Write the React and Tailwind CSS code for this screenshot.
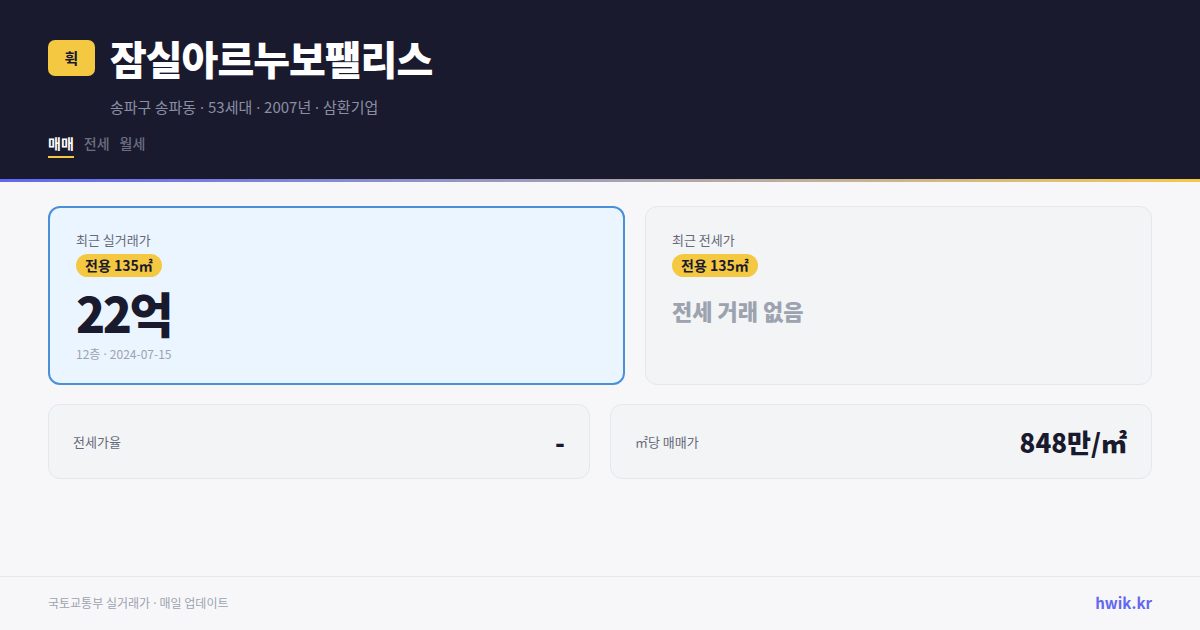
import React from "react";

const FONT = { fontFamily: '"Noto Sans CJK KR", "Noto Sans", sans-serif' };
const DOT = { fontFamily: '"Noto Sans", sans-serif' };

function Dot() {
  return <span style={DOT}> · </span>;
}

export default function App() {
  return (
    <div className="w-[1200px] h-[630px] flex flex-col bg-[#f7f7f9] overflow-hidden" style={FONT}>
      <header className="bg-[#1a1a2e] h-[179px] px-12 pt-[39px] flex flex-col">
        <div className="flex items-center gap-[15px]">
          <div className="w-[47px] h-[36px] rounded-[7px] bg-[#f5c842] flex items-center justify-center text-[15px] font-bold text-[#1a1a2e]">
            휙
          </div>
          <h1 className="text-[40px] leading-[38px] font-black text-white tracking-[-1px]">잠실아르누보팰리스</h1>
        </div>
        <div className="pl-[62px] mt-[20px] text-[15px] leading-[20px] text-[#8b8fa3]">
          송파구 송파동<Dot />53세대<Dot />2007년<Dot />삼환기업
        </div>
        <div className="flex gap-[10px] mt-[16px] text-[14px] leading-[20px]">
          <div className="font-bold text-white border-b-2 border-[#f5c842] pb-[3px]">매매</div>
          <div className="text-[#6b6f82] font-medium">전세</div>
          <div className="text-[#6b6f82] font-medium">월세</div>
        </div>
      </header>
      <div className="h-[3px] bg-gradient-to-r from-[#6366f1] to-[#f5c842]" />
      <main className="flex-1 px-12 pt-6 flex flex-col gap-[19px]">
        <div className="flex gap-5 h-[179px]">
          <div className="w-[577px] rounded-xl border-2 border-[#4a90d9] bg-[#ebf5ff] px-[26px] pt-[22px] flex flex-col">
            <div className="text-[13px] leading-[20px] text-[#666a78]">최근 실거래가</div>
            <div className="mt-[4px] self-start rounded-full bg-[#f5c842] px-[9px] h-[23px] flex items-center text-[14px] font-bold text-[#1a1a2e]">
              전용 135㎡
            </div>
            <div className="mt-[6px] text-[48px] leading-[58px] font-black text-[#1a1a2e] tracking-[-2.5px]">22억</div>
            <div className="mt-[4px] text-[12px] leading-[18px] text-[#9ca3af]">
              12층<Dot />2024-07-15
            </div>
          </div>
          <div className="flex-1 rounded-xl border border-[#e5e7eb] bg-[#f3f4f6] px-[26px] pt-[23px] flex flex-col">
            <div className="text-[13px] leading-[20px] text-[#666a78]">최근 전세가</div>
            <div className="mt-[4px] self-start rounded-full bg-[#f5c842] px-[9px] h-[23px] flex items-center text-[14px] font-bold text-[#1a1a2e]">
              전용 135㎡
            </div>
            <div className="mt-[17px] text-[22px] leading-[32px] font-extrabold text-[#9ca3af]">전세 거래 없음</div>
          </div>
        </div>
        <div className="flex gap-5 h-[75px]">
          <div className="flex-1 rounded-xl border border-[#e5e7eb] bg-[#f3f4f6] px-6 flex items-center justify-between">
            <div className="text-[13px] text-[#666a78]">전세가율</div>
            <div className="text-[26px] font-extrabold text-[#1a1a2e]">-</div>
          </div>
          <div className="flex-1 rounded-xl border border-[#e5e7eb] bg-[#f3f4f6] px-6 flex items-center justify-between">
            <div className="text-[13px] text-[#666a78]">㎡당 매매가</div>
            <div className="text-[26px] font-extrabold text-[#1a1a2e]">848만/㎡</div>
          </div>
        </div>
      </main>
      <footer className="h-[54px] border-t border-[#e5e7eb] px-12 flex items-center justify-between">
        <div className="text-[12px] text-[#9ca3af]">
          국토교통부 실거래가<Dot />매일 업데이트
        </div>
        <div className="text-[15px] font-bold text-[#6366f1]">hwik.kr</div>
      </footer>
    </div>
  );
}
